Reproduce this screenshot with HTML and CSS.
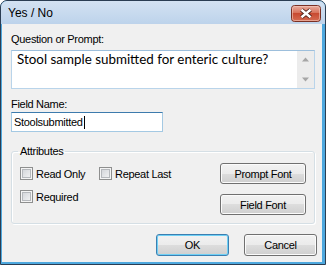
FILE: index.html
```html
<!DOCTYPE html>
<html lang="en">
<head>
    <meta charset="UTF-8">
    <title>Yes / No</title>
    <link rel="stylesheet" href="styles.css">
</head>
<body>

<div class="window">
    <div class="titlebar">
        <span class="title">Yes / No</span>
        <span class="close">
            <svg width="30" height="17" viewBox="0 0 30 17">
                <defs>
                    <linearGradient id="closeFill" x1="0" y1="0" x2="0" y2="1">
                        <stop offset="0" stop-color="#eab0a2"/>
                        <stop offset="0.45" stop-color="#d8735c"/>
                        <stop offset="0.5" stop-color="#c84a31"/>
                        <stop offset="1" stop-color="#d66e55"/>
                    </linearGradient>
                </defs>
                <rect x="0.5" y="0.5" width="29" height="16" rx="3" fill="url(#closeFill)" stroke="#7a3024"/>
                <rect x="1.5" y="1.5" width="27" height="14" rx="2" fill="none" stroke="#f3c9bd" stroke-opacity="0.6"/>
                <path d="M10.5 4.8 L19.5 12.2 M19.5 4.8 L10.5 12.2" stroke="#4a1e17" stroke-width="4.2"/>
                <path d="M10.5 4.8 L19.5 12.2 M19.5 4.8 L10.5 12.2" stroke="#fff" stroke-width="2.4"/>
            </svg>
        </span>
    </div>

    <div class="client">
        <div class="label">Question or Prompt:</div>
        <div class="prompt-box">
            <div class="prompt-text">Stool sample submitted for enteric culture?</div>
            <div class="scrollbar">
                <svg width="17" height="17" viewBox="0 0 17 17"><polygon points="5,10.5 12,10.5 8.5,6.5" fill="#a6a6a6"/></svg>
                <svg width="17" height="17" viewBox="0 0 17 17"><polygon points="5,6.5 12,6.5 8.5,10.5" fill="#a6a6a6"/></svg>
            </div>
        </div>

        <div class="label field-label">Field Name:</div>
        <div class="field-input"><span>Stoolsubmitted</span><span class="caret"></span></div>

        <fieldset class="attributes">
            <legend>Attributes</legend>
            <div class="attr-body">
                <div class="checks">
                    <div class="check-row">
                        <label class="check check-wide"><span class="box"></span>Read Only</label>
                        <label class="check"><span class="box"></span>Repeat Last</label>
                    </div>
                    <div class="check-row">
                        <label class="check"><span class="box"></span>Required</label>
                    </div>
                </div>
                <div class="font-buttons">
                    <button class="btn btn-font">Prompt Font</button>
                    <button class="btn btn-font">Field Font</button>
                </div>
            </div>
        </fieldset>

        <div class="actions">
            <button class="btn btn-action btn-default">OK</button>
            <button class="btn btn-action">Cancel</button>
        </div>
    </div>
</div>

</body>
</html>
```

FILE: styles.css
```css
body {
    margin: 0;
    background: #fff;
    font-family: "Liberation Sans", Arial, sans-serif;
    font-size: 11px;
    letter-spacing: -0.3px;
    color: #000;
}
.window {
    width: 326px;
    height: 265px;
    box-sizing: border-box;
    border: 1px solid #2a3d52;
    border-radius: 7px 7px 0 0;
    background: #4ea8de;
    display: flex;
    flex-direction: column;
    overflow: hidden;
}
.titlebar {
    flex: none;
    height: 23px;
    display: flex;
    align-items: flex-start;
    padding-left: 7px;
    background: linear-gradient(#d3e2f2, #bdd3eb);
}
.title {
    margin-top: 5px;
    font-size: 12px;
    line-height: 15px;
    letter-spacing: 0;
}
.close {
    margin-left: auto;
    margin-right: 4px;
    margin-top: 4px;
    height: 17px;
}
.close svg {
    display: block;
}
.client {
    flex: 1;
    margin: 0 3px 2px 1px;
    padding: 9px 0 0 9px;
    background: #f0f0f0;
}
.label {
    line-height: 13px;
}
.prompt-box {
    margin-top: 4px;
    width: 304px;
    height: 39px;
    box-sizing: border-box;
    border: 1px solid #b9d4ea;
    border-top-color: #9dbfdc;
    background: #fff;
    display: flex;
}
.prompt-text {
    flex: 1;
    padding: 0 5px;
    font-family: Lato, "Liberation Sans", sans-serif;
    font-size: 13.4px;
    line-height: 17px;
    letter-spacing: 0;
}
.scrollbar {
    flex: none;
    width: 17px;
    background: #ececec;
    display: flex;
    flex-direction: column;
    justify-content: space-between;
}
.scrollbar svg {
    display: block;
}
.field-label {
    margin-top: 9px;
}
.field-input {
    margin-top: 1px;
    width: 152px;
    height: 20px;
    box-sizing: border-box;
    border: 1px solid #a4c9e3;
    border-top-color: #3d7bad;
    background: #fff;
    padding-left: 2px;
    display: flex;
    align-items: center;
}
.caret {
    width: 1px;
    height: 13px;
    margin-left: 1px;
    background: #000;
}
.attributes {
    margin: 13px 0 0;
    width: 304px;
    box-sizing: border-box;
    padding: 0 8px 8px 8px;
    border: 1px solid #d5dfe5;
    border-radius: 3px;
    box-shadow: inset 1px 1px 0 #fff, 1px 1px 0 #fff;
    min-width: 0;
}
.attributes legend {
    padding: 0 2px;
    margin-left: -2px;
    line-height: 13px;
}
.attr-body {
    display: flex;
    justify-content: space-between;
}
.checks {
    padding-top: 8px;
}
.check-row {
    display: flex;
    height: 15px;
    margin-bottom: 8px;
}
.check {
    display: flex;
    align-items: center;
    gap: 3px;
}
.check-wide {
    width: 79px;
}
.box {
    width: 13px;
    height: 13px;
    box-sizing: border-box;
    border: 1px solid #8e8f8f;
    background: linear-gradient(135deg, #cdd0d5, #f7f7f7);
    box-shadow: inset 0 0 0 1px #f4f4f4, inset 0 0 0 2px #b5b8bc;
}
.font-buttons {
    padding-top: 5px;
    display: flex;
    flex-direction: column;
    gap: 10px;
}
.btn {
    font-family: "Liberation Sans", Arial, sans-serif;
    font-size: 11px;
    letter-spacing: -0.3px;
    color: #000;
    padding: 0;
    border: 1px solid #707070;
    border-radius: 3px;
    background: linear-gradient(#f2f2f2 0%, #ebebeb 50%, #dddddd 50%, #cfcfcf 100%);
    box-shadow: inset 0 0 0 1px #fbfbfb;
}
.btn-font {
    width: 86px;
    height: 21px;
}
.actions {
    margin-top: 10px;
    padding-right: 5px;
    display: flex;
    justify-content: flex-end;
    gap: 15px;
}
.btn-action {
    width: 73px;
    height: 22px;
}
.btn-default {
    border-color: #3c7fb1;
    box-shadow: inset 0 0 0 1px #6fd0f5;
}
```
